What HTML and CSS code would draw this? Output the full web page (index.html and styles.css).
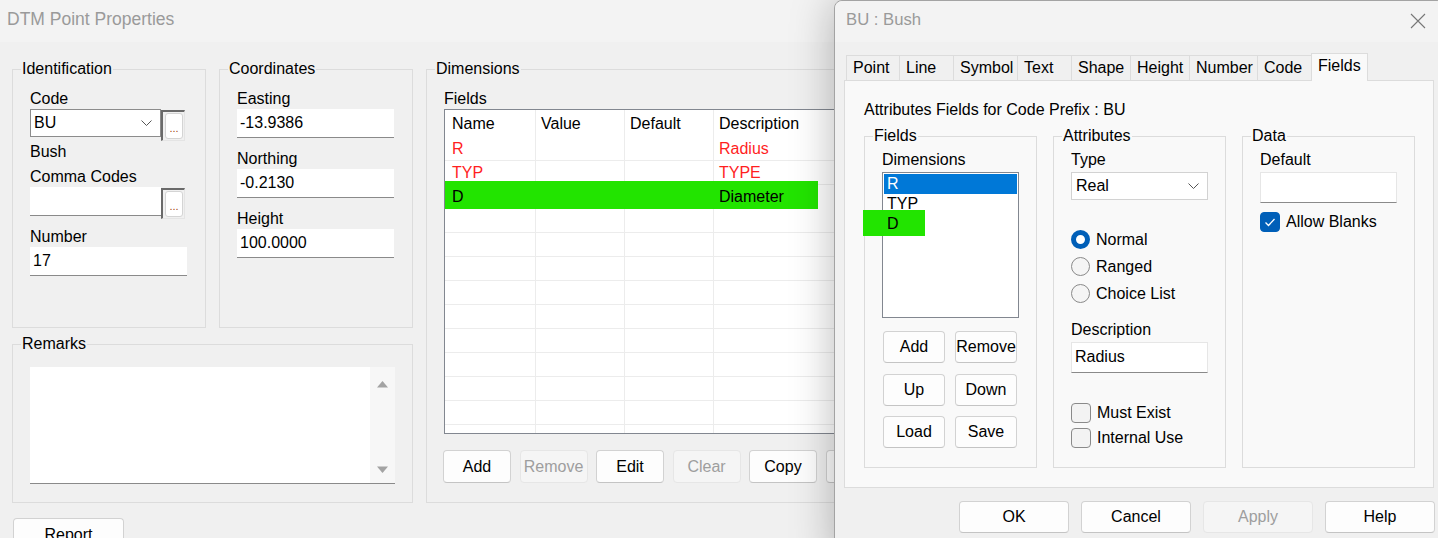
FILE: index.html
```html
<!DOCTYPE html>
<html>
<head>
<meta charset="utf-8">
<title>DTM Point Properties</title>
<link rel="stylesheet" href="styles.css">
</head>
<body>
<div class="main">
	<div class="titlebar">DTM Point Properties</div>
	<div class="main_body">
		<div class="left_col">
			<div class="top_row">
				<fieldset class="group ident">
					<legend>Identification</legend>
					<div class="lbl">Code</div>
					<div class="pick_row">
						<div class="combo"><span>BU</span><svg class="chev" width="11" height="6" viewBox="0 0 11 6"><path d="M0.5 0.5 L5.5 5.5 L10.5 0.5" fill="none" stroke="#555" stroke-width="1"/></svg></div>
						<div class="dots"><span>...</span></div>
					</div>
					<div class="lbl bush">Bush</div>
					<div class="lbl comma">Comma Codes</div>
					<div class="pick_row">
						<div class="field short"></div>
						<div class="dots"><span>...</span></div>
					</div>
					<div class="lbl number">Number</div>
					<div class="field">17</div>
				</fieldset>
				<fieldset class="group coords">
					<legend>Coordinates</legend>
					<div class="lbl">Easting</div>
					<div class="field">-13.9386</div>
					<div class="lbl next">Northing</div>
					<div class="field">-0.2130</div>
					<div class="lbl next">Height</div>
					<div class="field">100.0000</div>
				</fieldset>
			</div>
			<fieldset class="group remarks">
				<legend>Remarks</legend>
				<div class="memo">
					<div class="memo_bar">
						<svg width="11" height="8" viewBox="0 0 11 8"><path d="M0 7.5 L5.5 1 L11 7.5 Z" fill="#a3a3a3"/></svg>
						<svg width="11" height="8" viewBox="0 0 11 8"><path d="M0 0.5 L11 0.5 L5.5 7 Z" fill="#a3a3a3"/></svg>
					</div>
				</div>
			</fieldset>
			<button class="btn report">Report</button>
		</div>
		<fieldset class="group dims">
			<legend>Dimensions</legend>
			<div class="lbl">Fields</div>
			<div class="grid">
				<div class="g_row head"><div>Name</div><div>Value</div><div>Default</div><div>Description</div></div>
				<div class="g_row red"><div>R</div><div></div><div></div><div>Radius</div></div>
				<div class="g_row red"><div>TYP</div><div></div><div></div><div>TYPE</div></div>
				<div class="g_row hl"><div>D</div><div></div><div></div><div>Diameter</div></div>
				<div class="g_row"><div></div><div></div><div></div><div></div></div>
				<div class="g_row"><div></div><div></div><div></div><div></div></div>
				<div class="g_row"><div></div><div></div><div></div><div></div></div>
				<div class="g_row"><div></div><div></div><div></div><div></div></div>
				<div class="g_row"><div></div><div></div><div></div><div></div></div>
				<div class="g_row"><div></div><div></div><div></div><div></div></div>
				<div class="g_row"><div></div><div></div><div></div><div></div></div>
				<div class="g_row"><div></div><div></div><div></div><div></div></div>
				<div class="g_row"><div></div><div></div><div></div><div></div></div>
				<div class="g_row"><div></div><div></div><div></div><div></div></div>
			</div>
			<div class="btn_row">
				<button class="btn">Add</button>
				<button class="btn off">Remove</button>
				<button class="btn">Edit</button>
				<button class="btn off">Clear</button>
				<button class="btn">Copy</button>
				<button class="btn">Paste</button>
			</div>
		</fieldset>
	</div>
</div>

<div class="dialog">
	<div class="dlg_title">
		<span>BU : Bush</span>
		<svg class="close" width="16" height="16" viewBox="0 0 16 16"><path d="M1 1 L15 15 M15 1 L1 15" stroke="#767676" stroke-width="1.1" fill="none"/></svg>
	</div>
	<div class="dlg_body">
		<div class="tabs">
			<div class="tab">Point</div>
			<div class="tab">Line</div>
			<div class="tab">Symbol</div>
			<div class="tab">Text</div>
			<div class="tab">Shape</div>
			<div class="tab">Height</div>
			<div class="tab">Number</div>
			<div class="tab">Code</div>
			<div class="tab on">Fields</div>
		</div>
		<div class="panel">
			<div class="lbl">Attributes Fields for Code Prefix : BU</div>
			<div class="groups">
				<fieldset class="group box">
					<legend>Fields</legend>
					<div class="lbl">Dimensions</div>
					<div class="listbox">
						<div class="item sel">R</div>
						<div class="item">TYP</div>
						<div class="item hl">D</div>
					</div>
					<div class="small_btns">
						<button class="btn">Add</button>
						<button class="btn">Remove</button>
						<button class="btn">Up</button>
						<button class="btn">Down</button>
						<button class="btn">Load</button>
						<button class="btn">Save</button>
					</div>
				</fieldset>
				<fieldset class="group box">
					<legend>Attributes</legend>
					<div class="lbl">Type</div>
					<div class="select"><span>Real</span><svg width="11" height="6" viewBox="0 0 11 6"><path d="M0.5 0.5 L5.5 5.5 L10.5 0.5" fill="none" stroke="#555" stroke-width="1"/></svg></div>
					<div class="radios">
						<div class="opt"><span class="radio on"></span>Normal</div>
						<div class="opt"><span class="radio"></span>Ranged</div>
						<div class="opt"><span class="radio"></span>Choice List</div>
					</div>
					<div class="lbl desc">Description</div>
					<div class="field dlg_field">Radius</div>
					<div class="checks">
						<div class="opt chk_row"><span class="check"></span>Must Exist</div>
						<div class="opt chk_row"><span class="check"></span>Internal Use</div>
					</div>
				</fieldset>
				<fieldset class="group box">
					<legend>Data</legend>
					<div class="lbl">Default</div>
					<div class="field dlg_field"></div>
					<div class="opt chk_row blanks"><span class="check on"><svg width="18" height="18" viewBox="0 0 18 18"><path d="M4.5 9.5 L7.5 12.5 L13.5 6" stroke="#fff" stroke-width="1.3" fill="none"/></svg></span>Allow Blanks</div>
				</fieldset>
			</div>
		</div>
		<div class="dlg_btns">
			<button class="btn wide">OK</button>
			<button class="btn wide">Cancel</button>
			<button class="btn wide off">Apply</button>
			<button class="btn wide">Help</button>
		</div>
	</div>
</div>
</body>
</html>
```

FILE: styles.css
```css
* {
	box-sizing: border-box;
}
html, body {
	margin: 0;
	padding: 0;
}
body {
	position: relative;
	width: 1438px;
	height: 538px;
	overflow: hidden;
	font-family: "Liberation Sans", Arial, sans-serif;
	font-size: 16px;
	line-height: 18px;
	color: #000;
	background: #f0f0f0;
}
.lbl {
	height: 18px;
	white-space: nowrap;
}

/* background window */
.main {
	width: 1438px;
	height: 538px;
	background: #f0f0f0;
}
.titlebar {
	height: 42px;
	padding: 9px 0 0 7px;
	font-size: 17.5px;
	line-height: 20px;
	color: #9a9a9a;
	background: #f3f3f3;
}
.main_body {
	display: flex;
	align-items: flex-start;
	padding: 18px 0 0 12px;
}
.left_col {
	display: flex;
	flex-direction: column;
	width: 401px;
}
.top_row {
	display: flex;
	gap: 13px;
}
.group {
	margin: 0;
	min-width: 0;
	padding: 0 0 0 17px;
	border: 1px solid #dcdcdc;
}
.group legend {
	margin-left: -9px;
	padding: 0 1px;
	line-height: 18px;
}
.ident, .coords {
	width: 194px;
	height: 268px;
	padding-top: 12px;
}
.pick_row {
	display: flex;
	align-items: flex-start;
	margin-top: 1px;
}
.combo {
	display: flex;
	align-items: center;
	justify-content: space-between;
	width: 131px;
	height: 28px;
	padding: 0 8px 0 3px;
	background: #fff;
	border: 1px solid #8c8c8c;
}
.dots {
	width: 24px;
	height: 31px;
	margin-top: 1px;
	padding: 1px 1px 1px 2px;
	border-left: 2px solid #6a6a6a;
	border-top: 2px solid #6a6a6a;
	border-right: 1px solid #e4e4e4;
	border-bottom: 1px solid #e4e4e4;
}
.dots span {
	display: block;
	height: 100%;
	padding-top: 7px;
	font-size: 11px;
	line-height: 14px;
	text-align: center;
	color: #a04a10;
	background: #fff;
	border: 1px solid #d4d4d4;
	border-radius: 3px;
}
.field {
	width: 157px;
	height: 29px;
	margin-top: 1px;
	padding: 5px 0 0 3px;
	background: #fff;
	border-bottom: 1px solid #8a8a8a;
}
.field.short {
	width: 131px;
	margin-top: 0;
}
.bush {
	margin-top: 2px;
}
.comma {
	margin-top: 7px;
}
.number {
	margin-top: 9px;
}
.coords .next {
	margin-top: 12px;
}
.remarks {
	margin-top: 7px;
	padding-top: 14px;
	padding-bottom: 18px;
}
.memo {
	display: flex;
	justify-content: flex-end;
	width: 365px;
	height: 117px;
	background: #fff;
	border-bottom: 1px solid #8a8a8a;
}
.memo_bar {
	display: flex;
	flex-direction: column;
	justify-content: space-between;
	align-items: center;
	width: 25px;
	padding: 13px 0 9px;
	background: #f7f7f7;
}
.memo_bar svg {
	display: block;
}
.btn {
	height: 33px;
	padding: 0;
	font: inherit;
	color: #000;
	background: #fdfdfd;
	border: 1px solid #d2d2d2;
	border-bottom-color: #c4c4c4;
	border-radius: 4px;
}
.btn.off {
	color: #9e9e9e;
	background: #f5f5f5;
	border-color: #e6e6e6;
}
.report {
	width: 111px;
	margin: 15px 0 0 1px;
}
.dims {
	width: 460px;
	height: 443px;
	margin-left: 13px;
	padding-top: 12px;
}
.grid {
	width: 430px;
	height: 325px;
	margin-top: 1px;
	overflow: hidden;
	background: #fff;
	border: 1px solid #828790;
}
.g_row {
	display: grid;
	grid-template-columns: 91px 89px 89px 1fr;
	position: relative;
	height: 24px;
}
.g_row div {
	padding-left: 5px;
	line-height: 23px;
	white-space: nowrap;
	border-right: 1px solid #ececec;
	border-bottom: 1px solid #ececec;
}
.g_row div:first-child {
	padding-left: 7px;
}
.g_row.head {
	height: 27px;
}
.g_row.head div {
	line-height: 27px;
	border-bottom: 0;
}
.g_row.red div {
	color: #ff1f1f;
}
.g_row.hl::before {
	content: "";
	position: absolute;
	left: 0;
	top: -4px;
	width: 373px;
	height: 28px;
	background: #22e400;
}
.g_row.hl div {
	position: relative;
	border-color: transparent;
}
.btn_row {
	display: flex;
	gap: 8.5px;
	margin: 16px 0 0 -1px;
}
.btn_row .btn {
	width: 68px;
	flex: none;
}

/* foreground dialog */
.dialog {
	position: absolute;
	left: 834px;
	top: 0;
	width: 611px;
	height: 560px;
	background: #f0f0f0;
	border: 1px solid #a3a3a3;
	border-radius: 8px 8px 0 0;
	box-shadow: 0 0 44px rgba(0, 0, 0, 0.28);
}
.dlg_title {
	display: flex;
	justify-content: space-between;
	align-items: flex-start;
	height: 41px;
	padding: 10px 18px 0 11px;
	font-size: 16.7px;
	color: #9a9a9a;
	background: #f3f3f3;
	border-radius: 8px 8px 0 0;
}
.close {
	margin-top: 2px;
}
.dlg_body {
	padding: 11px 10px 0 9px;
}
.tabs {
	display: flex;
	align-items: flex-end;
	position: relative;
	z-index: 1;
	height: 28px;
	margin: 0 0 -1px 2px;
}
.tab {
	height: 25px;
	margin-bottom: 1px;
	padding-left: 6px;
	line-height: 24px;
	white-space: nowrap;
	background: #f0f0f0;
	border: 1px solid #dcdcdc;
	border-bottom: 0;
	border-right: 0;
}
.tab:nth-child(1) { width: 53px; }
.tab:nth-child(2) { width: 54px; }
.tab:nth-child(3) { width: 64px; }
.tab:nth-child(4) { width: 54px; }
.tab:nth-child(5) { width: 59px; }
.tab:nth-child(6) { width: 59px; }
.tab:nth-child(7) { width: 68px; }
.tab:nth-child(8) { width: 54px; }
.tab.on {
	width: 57px;
	height: 28px;
	margin-bottom: 0;
	line-height: 23px;
	background: #f9f9f9;
	border-right: 1px solid #dcdcdc;
}
.panel {
	width: 590px;
	height: 408px;
	padding: 20px 0 0 19px;
	background: #f9f9f9;
	border: 1px solid #dcdcdc;
}
.groups {
	display: flex;
	gap: 16px;
	margin-top: 8px;
}
.box {
	width: 173px;
	height: 341px;
	padding-top: 6px;
}
.listbox {
	width: 137px;
	height: 146px;
	margin-top: 3px;
	padding-top: 1px;
	background: #fff;
	border: 1px solid #828790;
}
.item {
	position: relative;
	height: 20px;
	margin: 0 1px;
	padding-left: 3px;
	line-height: 20px;
}
.item.sel {
	color: #fff;
	background: #0078d7;
}
.item.hl {
	z-index: 0;
}
.item.hl::before {
	content: "";
	position: absolute;
	z-index: -1;
	left: -21px;
	top: -4px;
	width: 62px;
	height: 26px;
	background: #22e400;
}
.small_btns {
	display: grid;
	grid-template-columns: 62px 62px;
	gap: 10.5px 10px;
	margin: 13px 0 0 1px;
}
.small_btns .btn {
	height: 32px;
}
.select {
	display: flex;
	align-items: center;
	justify-content: space-between;
	width: 137px;
	height: 28px;
	margin-top: 3px;
	padding: 0 8px 0 4px;
	background: #fff;
	border: 1px solid #d2d2d2;
}
.radios {
	margin-top: 26px;
}
.opt {
	display: flex;
	align-items: center;
	gap: 6px;
	height: 27px;
	white-space: nowrap;
}
.radio {
	width: 19px;
	height: 19px;
	background: #f5f5f5;
	border: 1px solid #8a8a8a;
	border-radius: 50%;
}
.radio.on {
	background: #fff;
	border: 5.5px solid #005fb8;
}
.desc {
	margin-top: 14px;
}
.dlg_field {
	width: 137px;
	height: 31px;
	margin-top: 3px;
	border: 1px solid #e6e6e6;
	border-bottom-color: #8a8a8a;
}
.checks {
	margin-top: 27px;
}
.chk_row {
	height: 25px;
}
.check {
	width: 20px;
	height: 20px;
	background: #f3f3f3;
	border: 1px solid #8a8a8a;
	border-radius: 4px;
}
.check.on {
	background: #005fb8;
	border-color: #005fb8;
}
.check svg {
	display: block;
}
.blanks {
	margin-top: 6px;
}
.dlg_btns {
	display: flex;
	justify-content: flex-end;
	gap: 12px;
	margin: 13px -1px 0 0;
}
.btn.wide {
	width: 110px;
	height: 32px;
}
```
